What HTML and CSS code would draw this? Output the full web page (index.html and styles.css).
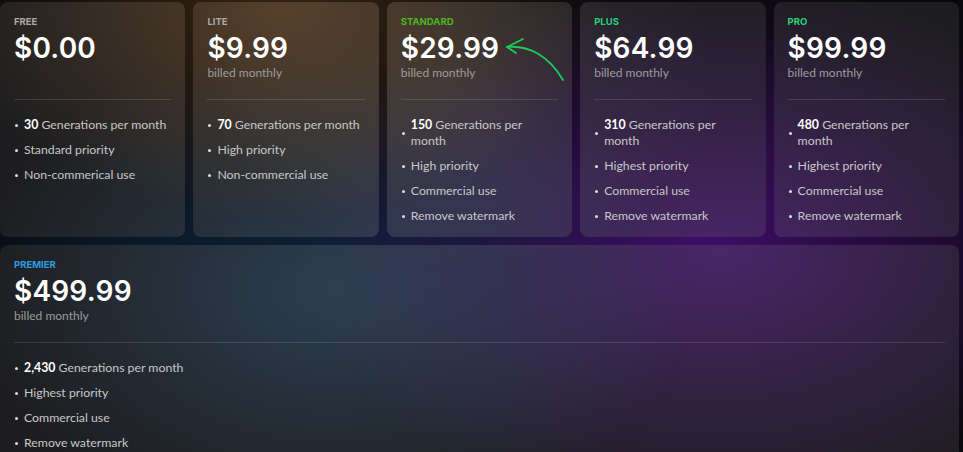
FILE: index.html
```html
<!DOCTYPE html>
<html lang="en">
<head>
<meta charset="utf-8">
<title>Pricing</title>
<link rel="stylesheet" href="styles.css">
</head>
<body>
<main class="plans">
  <section class="card">
    <div class="tier tier-gray">FREE</div>
    <div class="price">$0.00</div>
    <div class="billed"></div>
    <hr class="divider">
    <ul class="features">
      <li><span><b>30</b> Generations per month</span></li>
      <li><span>Standard priority</span></li>
      <li><span>Non-commerical use</span></li>
    </ul>
  </section>
  <section class="card">
    <div class="tier tier-gray">LITE</div>
    <div class="price">$9.99</div>
    <div class="billed">billed monthly</div>
    <hr class="divider">
    <ul class="features">
      <li><span><b>70</b> Generations per month</span></li>
      <li><span>High priority</span></li>
      <li><span>Non-commercial use</span></li>
    </ul>
  </section>
  <section class="card card-featured">
    <div class="tier tier-lime">STANDARD</div>
    <div class="price">$29.99</div>
    <div class="billed">billed monthly</div>
    <svg class="arrow" width="70" height="50" viewBox="0 0 70 50" aria-hidden="true">
      <path d="M3 15 C 25 13, 45 24, 59 48" fill="none" stroke="#1fc95b" stroke-width="1.8" stroke-linecap="round"/>
      <path d="M19 7 L 3 15 L 12 21" fill="none" stroke="#1fc95b" stroke-width="1.8" stroke-linecap="round" stroke-linejoin="round"/>
    </svg>
    <hr class="divider">
    <ul class="features">
      <li><span><b>150</b> Generations per month</span></li>
      <li><span>High priority</span></li>
      <li><span>Commercial use</span></li>
      <li><span>Remove watermark</span></li>
    </ul>
  </section>
  <section class="card">
    <div class="tier tier-green">PLUS</div>
    <div class="price">$64.99</div>
    <div class="billed">billed monthly</div>
    <hr class="divider">
    <ul class="features">
      <li><span><b>310</b> Generations per month</span></li>
      <li><span>Highest priority</span></li>
      <li><span>Commercial use</span></li>
      <li><span>Remove watermark</span></li>
    </ul>
  </section>
  <section class="card">
    <div class="tier tier-green">PRO</div>
    <div class="price">$99.99</div>
    <div class="billed">billed monthly</div>
    <hr class="divider">
    <ul class="features">
      <li><span><b>480</b> Generations per month</span></li>
      <li><span>Highest priority</span></li>
      <li><span>Commercial use</span></li>
      <li><span>Remove watermark</span></li>
    </ul>
  </section>
  <section class="card card-wide">
    <div class="tier tier-blue">PREMIER</div>
    <div class="price">$499.99</div>
    <div class="billed">billed monthly</div>
    <hr class="divider">
    <ul class="features">
      <li><span><b>2,430</b> Generations per month</span></li>
      <li><span>Highest priority</span></li>
      <li><span>Commercial use</span></li>
      <li><span>Remove watermark</span></li>
    </ul>
  </section>
</main>
</body>
</html>
```
FILE: styles.css
```css
html {
  overflow: hidden;
}
body {
  margin: 0;
  min-height: 100vh;
  font-family: Inter, "Noto Sans", sans-serif;
  color: #fff;
  background-color: #09090b;
  background-image:
    radial-gradient(ellipse 340px 200px at 280px 10px, rgba(95, 62, 28, 0.5), rgba(95, 62, 28, 0)),
    radial-gradient(ellipse 380px 240px at 280px 310px, rgba(18, 58, 98, 0.6), rgba(18, 58, 98, 0)),
    radial-gradient(ellipse 420px 260px at 700px 240px, rgba(75, 15, 125, 0.8), rgba(75, 15, 125, 0));
  background-attachment: fixed;
}
.plans {
  display: grid;
  grid-template-columns: repeat(5, 1fr);
  gap: 8px;
  padding: 2px 4px 0 0;
}
.card {
  position: relative;
  border-radius: 8px;
  padding: 14px 14px 16px;
  background-color: #1d1d1f;
  background-image:
    radial-gradient(ellipse 330px 210px at 280px 10px, rgba(130, 90, 50, 0.55), rgba(130, 90, 50, 0)),
    radial-gradient(ellipse 260px 200px at 460px 70px, rgba(255, 255, 255, 0.07), rgba(255, 255, 255, 0)),
    radial-gradient(ellipse 360px 250px at 330px 290px, rgba(60, 95, 130, 0.5), rgba(60, 95, 130, 0)),
    radial-gradient(ellipse 420px 270px at 720px 250px, rgba(110, 45, 165, 0.55), rgba(110, 45, 165, 0));
  background-attachment: fixed;
  height: 235px;
  box-sizing: border-box;
}
.card-wide {
  grid-column: 1 / -1;
  height: auto;
  min-height: 240px;
}
.tier {
  font-size: 9.5px;
  line-height: 12px;
  font-weight: 700;
}
.tier-gray { color: #a9a9a9; }
.tier-lime { color: #4bb81e; }
.tier-green { color: #24d27c; }
.tier-blue { color: #2d9de2; }
.price {
  margin-top: 2px;
  font-size: 28px;
  line-height: 36px;
  font-weight: 600;
  letter-spacing: 0.2px;
}
.billed {
  height: 14px;
  font-family: Lato, "Noto Sans", sans-serif;
  font-size: 12px;
  line-height: 14px;
  color: #9c9c9c;
}
.divider {
  margin: 19px 0 0;
  border: 0;
  height: 1px;
  background: rgba(255, 255, 255, 0.12);
}
.features {
  list-style: none;
  margin: 17px 0 0;
  padding: 0;
  display: flex;
  flex-direction: column;
  gap: 9px;
}
.features li {
  display: flex;
  align-items: center;
  gap: 6px;
  font-family: Lato, "Noto Sans", sans-serif;
  font-size: 12.3px;
  line-height: 16px;
  color: #c8c8c8;
}
.features li::before {
  content: "";
  flex-shrink: 0;
  width: 3px;
  height: 3px;
  margin-left: 1px;
  border-radius: 50%;
  background: #e0e0e0;
}
.features b {
  color: #fff;
  font-weight: 700;
}
.arrow {
  position: absolute;
  left: 117px;
  top: 30px;
}
```
